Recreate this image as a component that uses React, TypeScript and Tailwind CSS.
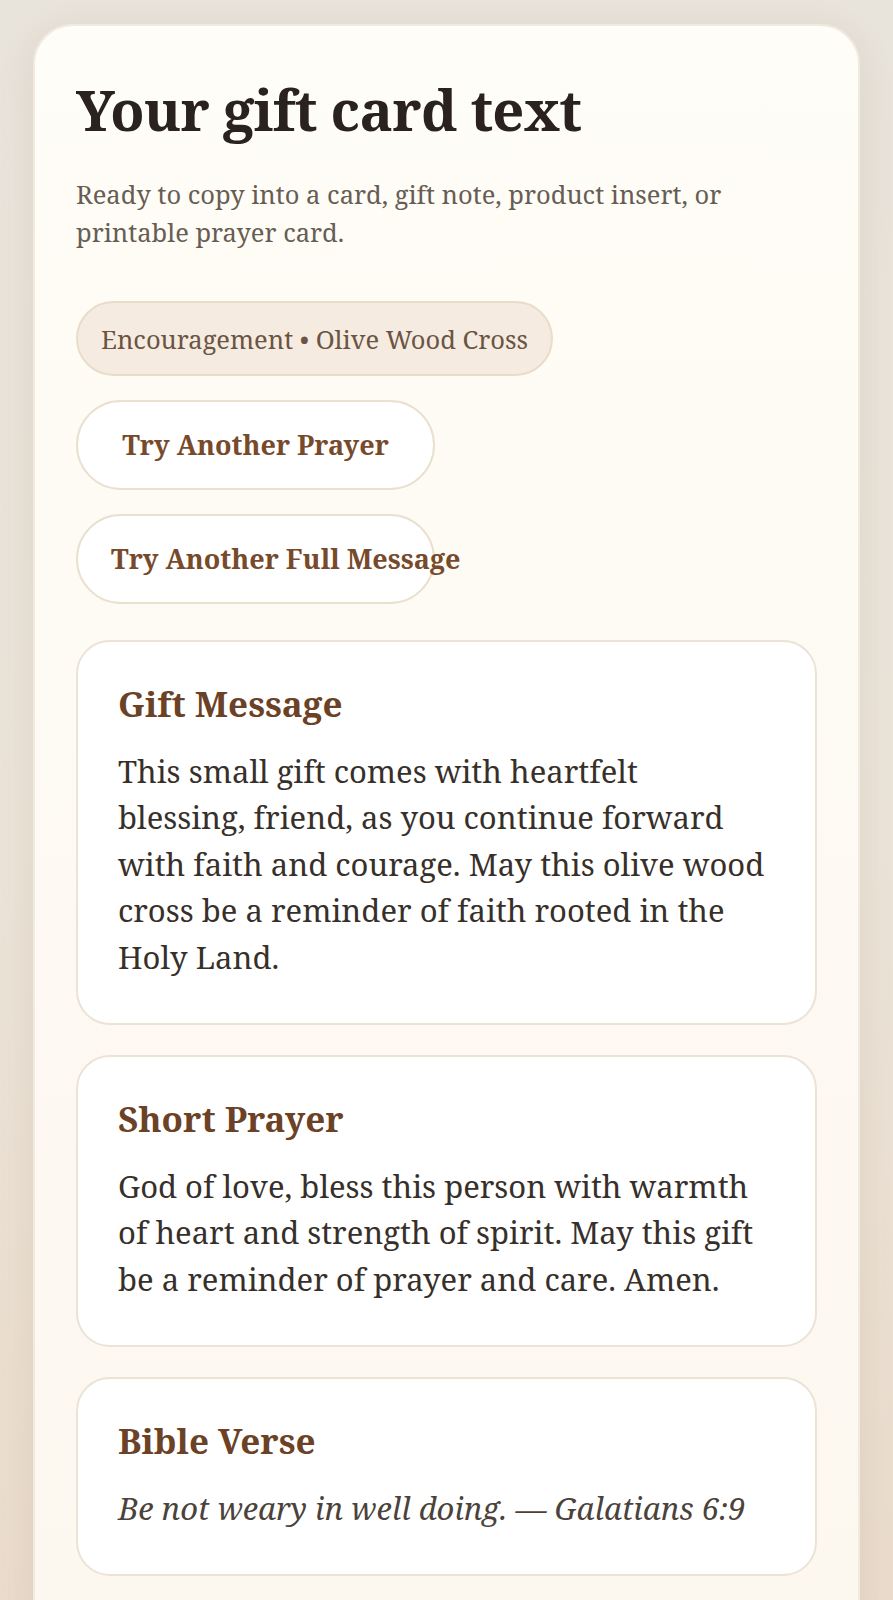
import React from "react";

const serif = { fontFamily: '"Noto Serif", "DejaVu Serif", serif' };

function Section({ title, children }: { title: string; children: React.ReactNode }) {
  return (
    <div className="rounded-[34px] border-2 border-[#ebe3d5] bg-white pl-[40px] pr-[43px] pt-[39px] pb-[43px]">
      <h2 className="text-[35px] font-bold leading-[1.3] text-[#6b4226]">{title}</h2>
      <div className="mt-[21px] text-[31px] leading-[46.5px] text-[#37302a]">{children}</div>
    </div>
  );
}

export default function App() {
  return (
    <div
      className="min-h-screen bg-gradient-to-b from-[#e8e3db] via-[#ebe3d8] to-[#eadaca] px-[33px] pt-[24px]"
      style={serif}
    >
      <div className="min-h-[1700px] rounded-[40px] border-2 border-[#f1eadf] bg-gradient-to-b from-[#fffdf7] to-[#fcf7ef] px-[41px] pt-[50px] shadow-[0_8px_36px_rgba(120,90,50,0.10)]">
        <h1 className="text-[56px] font-bold leading-[1.2] tracking-[-0.7px] text-[#2a231d]">Your gift card text</h1>
        <p className="mt-[32px] text-[25.5px] leading-[38px] text-[#675d54]">
          Ready to copy into a card, gift note, product insert, or printable prayer card.
        </p>
        <div className="mt-[50px] flex flex-col items-start gap-[24px]">
          <span className="inline-flex h-[75px] items-center rounded-full border-2 border-[#e9dcc9] bg-[#f5ebe0] px-[23px] text-[25.5px] text-[#6b5444]">
            Encouragement • Olive Wood Cross
          </span>
          <button className="h-[90px] w-[359px] whitespace-nowrap rounded-full border-2 border-[#e9e0d0] bg-white px-[33px] text-center text-[27px] font-bold text-[#774a2c]">
            Try Another Prayer
          </button>
          <button className="h-[90px] w-[359px] whitespace-nowrap rounded-full border-2 border-[#e9e0d0] bg-white px-[33px] text-center text-[27px] font-bold text-[#774a2c]">
            Try Another Full Message
          </button>
        </div>
        <div className="mt-[36px] flex flex-col gap-[30px]">
          <Section title="Gift Message">
            This small gift comes with heartfelt blessing, friend, as you continue forward with faith and courage. May
            this olive wood cross be a reminder of faith rooted in the Holy Land.
          </Section>
          <Section title="Short Prayer">
            God of love, bless this person with warmth of heart and strength of spirit. May this gift be a reminder of
            prayer and care. Amen.
          </Section>
          <Section title="Bible Verse">
            <span className="italic text-[#4a423b]">Be not weary in well doing. — Galatians 6:9</span>
          </Section>
        </div>
      </div>
    </div>
  );
}
